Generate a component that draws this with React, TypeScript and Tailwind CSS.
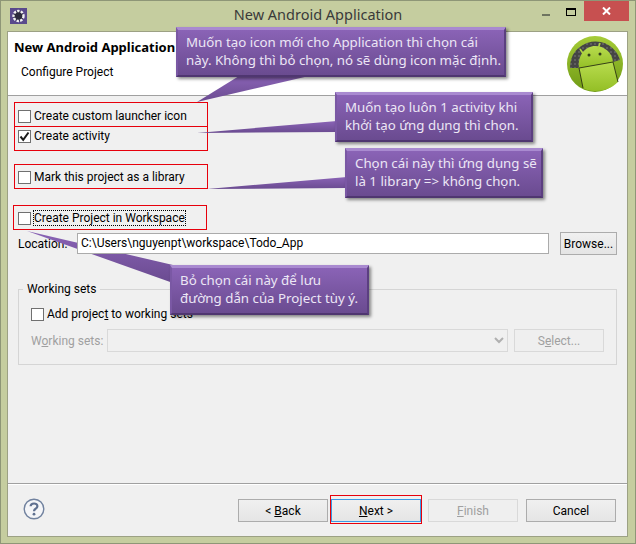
// New Android Application wizard, "Configure Project" page, with the purple
// tutorial callouts and red marker boxes laid over it.

import type { ReactNode } from 'react'

const UI_FONT = 'font-["Roboto",sans-serif]'

function CheckBox({ checked = false }: { checked?: boolean }) {
  return (
    <span className="w-[13px] h-[13px] shrink-0 border border-[#707070] bg-white flex items-center justify-center">
      {checked && (
        <svg width="11" height="11" viewBox="0 0 11 11">
          <path d="M1.5 5.5 L4.2 8.8 L9.5 1.5" fill="none" stroke="#1a1a1a" strokeWidth="2" />
        </svg>
      )}
    </span>
  )
}

function CheckRow({ label, checked, className }: { label: ReactNode; checked?: boolean; className: string }) {
  return (
    <div className={`flex items-center gap-[3px] h-[16px] text-black ${className}`}>
      <CheckBox checked={checked} />
      <span className="leading-[16px] whitespace-nowrap">{label}</span>
    </div>
  )
}

function WizardButton({ children, kind = 'normal', className = '' }: { children: ReactNode; kind?: 'normal' | 'default' | 'disabled'; className?: string }) {
  const look = {
    normal: 'border-[#acacac] bg-gradient-to-b from-[#f0f0f0] to-[#e5e5e5] text-black',
    default: 'border-[#3c9ae4] bg-gradient-to-b from-[#f0f0f0] to-[#e5e5e5] text-black',
    disabled: 'border-[#d9d9d9] bg-[#efefef] text-[#a0a0a0]',
  }[kind]
  return (
    <div className={`h-[23px] flex items-center justify-center border whitespace-pre ${look} ${className}`}>
      {children}
    </div>
  )
}

function Callout({ lines, className }: { lines: string[]; className: string }) {
  return (
    <div className={`absolute h-[50px] pl-[8px] pt-[3px] font-["Noto_Sans",sans-serif] text-[13.3px] leading-[18px] text-[#ece6f5] whitespace-nowrap border-t-[3px] border-t-[#a98ad0] border-r-[2px] border-r-[#5b3f80] border-b-[2px] border-b-[#4f3670] border-l-[2px] border-l-[#7a58a4] bg-gradient-to-b from-[#8a63b6] to-[#6a4b90] shadow-[2px_2px_3px_rgba(0,0,0,0.45)] ${className}`}>
      {lines.map((l) => <div key={l}>{l}</div>)}
    </div>
  )
}

function AndroidLogo() {
  return (
    <svg width="58" height="58" viewBox="0 0 58 58">
      <defs>
        <linearGradient id="rim" x1="0" y1="0" x2="0" y2="1">
          <stop offset="0" stopColor="#a6cc38" />
          <stop offset="1" stopColor="#6f9a14" />
        </linearGradient>
        <linearGradient id="bot" x1="0" y1="0" x2="0" y2="1">
          <stop offset="0" stopColor="#b8dc4e" />
          <stop offset="1" stopColor="#94bf26" />
        </linearGradient>
        <pattern id="grid" width="4" height="4" patternUnits="userSpaceOnUse">
          <rect width="4" height="4" fill="#454545" />
          <rect width="2" height="2" fill="#5e5e5e" />
        </pattern>
      </defs>
      <circle cx="29" cy="29" r="28" fill="url(#rim)" />
      <path d="M4 33 A25.5 25.5 0 0 1 54 25 L47 27 L13 33 Z" fill="url(#grid)" />
      <path d="M13 33 C11 20 20 11 29 11 C38 11 46 17 47 27 Z" fill="url(#bot)" />
      <path d="M13 33 L47 27 L52 47 C46 53 38 56 29 56 C24 56 20 55 17 53 Z" fill="url(#bot)" />
      <path d="M14 14 L18 20 M34 8 L32 14" stroke="#b0d640" strokeWidth="1.6" />
      <circle cx="23" cy="20" r="1.5" fill="#33401a" />
      <circle cx="34" cy="19" r="1.5" fill="#33401a" />
      <path d="M13 33 L47 27 M13 33 L17 53 M47 27 L52 47" stroke="#2b3312" strokeWidth="0.9" fill="none" />
    </svg>
  )
}

export default function App() {
  return (
    <div className={`relative w-[636px] h-[544px] overflow-hidden border border-[#8e9677] bg-[#c5cd9f] text-[12px] ${UI_FONT}`}>
      {/* title bar */}
      <div className='h-[30px] relative flex items-center justify-center pb-[2px] font-["Noto_Sans",sans-serif]'>
        <svg className="absolute left-[9px] top-[7px]" width="17" height="16" viewBox="0 0 17 16">
          <rect width="17" height="16" fill="#5a4a8c" />
          <circle cx="8.5" cy="8" r="5" fill="#2c2a3c" stroke="#f2f2f2" strokeWidth="2.4" strokeDasharray="2.4 1.2" />
        </svg>
        <span className="text-[14.5px] text-[#3a3a3a]">New Android Application</span>
        <span className="absolute left-[541px] top-[13px] w-[8px] h-[2px] bg-[#6e7460]" />
        <span className="absolute left-[565px] top-[7px] w-[10px] h-[8px] border border-t-2 border-black" />
        <span className="absolute left-[583px] top-0 w-[45px] h-[20px] bg-[#c75050] flex items-center justify-center">
          <svg width="9" height="8" viewBox="0 0 9 8">
            <path d="M1 0.5 L8 7.5 M8 0.5 L1 7.5" stroke="#fff" strokeWidth="2" />
          </svg>
        </span>
      </div>

      {/* client area */}
      <div className="mx-[6px] h-[506px] w-[621px] border border-[#9ca184] bg-[#f0f0f0] flex flex-col">
        <div className="h-[64px] shrink-0 bg-white border-b border-[#a0a0a0] flex">
          <div className="flex-1 pl-[6px] pt-[7px]">
            <div className='font-bold font-["Noto_Sans",sans-serif] text-[13px] leading-[16px] text-black whitespace-nowrap'>New Android Application</div>
            <div className="pl-[7px] mt-[9px] leading-[16px] text-black">Configure Project</div>
          </div>
          <div className="pr-[3px] pt-[3px]"><AndroidLogo /></div>
        </div>

        <div className="flex-1 relative pl-[10px] flex flex-col">
          <CheckRow className="mt-[12px]" label="Create custom launcher icon" />
          <CheckRow className="mt-[4px]" checked label="Create activity" />
          <CheckRow className="mt-[25px]" label="Mark this project as a library" />
          <CheckRow className="mt-[25px]" label={<span className="outline-1 outline-dotted outline-black">Create Project in Workspace</span>} />

          <div className="flex items-center mt-[6px] h-[23px]">
            <span className="w-[59px] text-black">Location:</span>
            <div className="relative z-10 w-[472px] h-[21px] border border-[#ababab] bg-white pl-[3px] leading-[19px] text-black">C:\Users\nguyenpt\workspace\Todo_App</div>
            <WizardButton className="ml-[11px] w-[57px]">Browse...</WizardButton>
          </div>

          <fieldset className="mt-[27px] w-[599px] h-[83px] border border-[#d5d5d5] pl-[12px] pr-[12px]">
            <legend className="ml-[-8px] px-[4px] leading-[14px] text-black">Working sets</legend>
            <CheckRow className="mt-[10px]" label={<>Add projec<span className="underline">t</span> to working sets</>} />
            <div className="flex items-center mt-[7px] h-[23px] text-[#a0a0a0]">
              <span className="w-[76px] whitespace-nowrap">W<span className="underline">o</span>rking sets:</span>
              <div className="w-[401px] h-[23px] border border-[#d9d9d9] flex items-center justify-end pr-[3px]">
                <svg width="10" height="7" viewBox="0 0 10 7"><path d="M1 1 L5 5 L9 1" fill="none" stroke="#b0b0b0" strokeWidth="2" /></svg>
              </div>
              <WizardButton kind="disabled" className="ml-[6px] w-[90px]">S<span className="underline">e</span>lect...</WizardButton>
            </div>
          </fieldset>

          <div className="mt-auto -ml-[10px] border-t border-[#a0a0a0] shadow-[inset_0_1px_0_#ffffff] h-[53px] pl-[15px] pr-[11px] pt-[15px] flex">
            <svg width="22" height="22" viewBox="0 0 22 22" className="-mt-[1px]">
              <circle cx="11" cy="11" r="9.8" fill="#f4f5f8" stroke="#71829f" strokeWidth="1.4" />
              <path d="M7.6 8.3 C7.8 4.6 14.4 4.6 14.4 8.2 C14.4 10.6 11 10.6 11 13.2" fill="none" stroke="#5f7090" strokeWidth="2.2" />
              <circle cx="11" cy="16.2" r="1.4" fill="#5f7090" />
            </svg>
            <div className="ml-auto flex">
              <WizardButton className="w-[90px]">&lt; <span className="underline">B</span>ack</WizardButton>
              <WizardButton kind="default" className="ml-[3px] w-[90px]"><span className="underline">N</span>ext &gt;</WizardButton>
              <WizardButton kind="disabled" className="ml-[7px] w-[90px]"><span className="underline">F</span>inish</WizardButton>
              <WizardButton className="ml-[8px] w-[90px]">Cancel</WizardButton>
            </div>
          </div>
        </div>
      </div>

      {/* red marker boxes */}
      <div className="absolute left-[13px] top-[101px] w-[194px] h-[25px] border border-red-600" />
      <div className="absolute left-[13px] top-[125px] w-[194px] h-[25px] border border-red-600" />
      <div className="absolute left-[13px] top-[163px] w-[194px] h-[25px] border border-red-600" />
      <div className="absolute left-[12px] top-[204px] w-[194px] h-[25px] border border-red-600" />
      <div className="absolute left-[329px] top-[494px] w-[92px] h-[29px] border border-red-600" />

      {/* callout tails */}
      <svg className="absolute left-0 top-0" width="636" height="544" viewBox="0 0 636 544">
        <defs>
          <linearGradient id="tail" x1="0" y1="0" x2="0" y2="1">
            <stop offset="0" stopColor="#8a63b6" />
            <stop offset="1" stopColor="#6a4b90" />
          </linearGradient>
        </defs>
        <path d="M196 101 L238 75 L308 75 Z" fill="url(#tail)" />
        <path d="M196 132 L336 120 L336 131 Z" fill="url(#tail)" />
        <path d="M206 188 L346 176 L346 187 Z" fill="url(#tail)" />
        <path d="M26 230 L172 264 L172 282 Z" fill="url(#tail)" />
      </svg>

      <Callout className="left-[175px] top-[26px] w-[330px]" lines={['Muốn tạo icon mới cho Application thì chọn cái', 'này. Không thì bỏ chọn, nó sẽ dùng icon mặc định.']} />
      <Callout className="left-[334px] top-[91px] w-[198px]" lines={['Muốn tạo luôn 1 activity khi', 'khởi tạo ứng dụng thì chọn.']} />
      <Callout className="left-[344px] top-[147px] w-[198px]" lines={['Chọn cái này thì ứng dụng sẽ', 'là 1 library => không chọn.']} />
      <Callout className="left-[169px] top-[264px] w-[199px]" lines={['Bỏ chọn cái này để lưu', 'đường dẫn của Project tùy ý.']} />
    </div>
  )
}
